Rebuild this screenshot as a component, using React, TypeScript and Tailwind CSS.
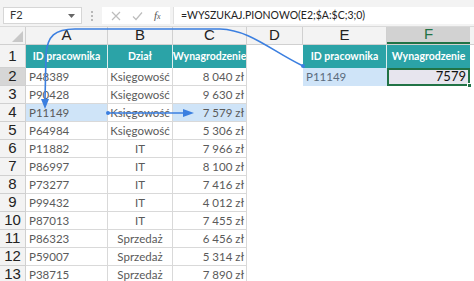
import React from "react";

const rows = [
  ["P48389", "Księgowość", "8 040 zł"],
  ["P90428", "Księgowość", "9 630 zł"],
  ["P11149", "Księgowość", "7 579 zł"],
  ["P64984", "Księgowość", "5 306 zł"],
  ["P11882", "IT", "7 966 zł"],
  ["P86997", "IT", "8 100 zł"],
  ["P73277", "IT", "7 416 zł"],
  ["P99432", "IT", "4 012 zł"],
  ["P87013", "IT", "7 455 zł"],
  ["P86323", "Sprzedaż", "6 456 zł"],
  ["P59007", "Sprzedaż", "5 314 zł"],
  ["P38715", "Sprzedaż", "7 890 zł"],
];

function FormulaBar() {
  return (
    <div className="h-[27px] bg-[#f3f3f3] border-b border-[#dadada] flex items-start pt-[7px] pl-[3px]">
      <div className="w-[79px] h-[17px] bg-white border border-[#d6d6d6] flex items-center justify-between px-[6px]">
        <span className="text-[11px] text-[#333]">F2</span>
        <svg width="7" height="4" viewBox="0 0 7 4">
          <path d="M0 0 L7 0 L3.5 4 Z" fill="#666" />
        </svg>
      </div>
      <div className="w-[20px] h-[17px] flex flex-col items-center justify-center gap-[2px]">
        <span className="w-[2px] h-[2px] bg-[#b8b8b8]" />
        <span className="w-[2px] h-[2px] bg-[#b8b8b8]" />
        <span className="w-[2px] h-[2px] bg-[#b8b8b8]" />
      </div>
      <div className="w-[68px] h-[17px] bg-white flex items-center justify-around px-[4px]">
        <svg width="10" height="10" viewBox="0 0 10 10">
          <path d="M1 1 L9 9 M9 1 L1 9" stroke="#bdbdbd" strokeWidth="1.2" />
        </svg>
        <svg width="11" height="10" viewBox="0 0 11 10">
          <path d="M1 5.5 L4 8.5 L10 1.5" stroke="#bdbdbd" strokeWidth="1.2" fill="none" />
        </svg>
        <span className="text-[11px] italic text-[#555] font-['Liberation_Serif',serif]">f<span className="text-[8px]">x</span></span>
      </div>
      <div className="ml-[3px] flex-1 h-[17px] bg-white border-l border-[#e0e0e0] flex items-center pl-[7px]">
        <span className="text-[10.5px] text-[#222] whitespace-nowrap">=WYSZUKAJ.PIONOWO(E2;$A:$C;3;0)</span>
      </div>
    </div>
  );
}

function Arrows() {
  return (
    <svg className="absolute left-0 top-0 pointer-events-none" width="474" height="281" viewBox="0 0 474 281">
      <path
        d="M303 66 C 270 50, 250 30, 220 29 L 75 29 C 55 29, 47 36, 46 55 L 45 100"
        stroke="#3b7fe0"
        strokeWidth="1.6"
        fill="none"
      />
      <path d="M41 99 L45 109 L49 99 Z" fill="#3b7fe0" />
      <circle cx="303" cy="66" r="2" fill="#3b7fe0" />
      <path d="M108 113 L186 113" stroke="#3b7fe0" strokeWidth="1.6" />
      <circle cx="108" cy="113" r="2" fill="#3b7fe0" />
      <path d="M183 109 L194 113 L183 117 Z" fill="#3b7fe0" />
    </svg>
  );
}

export default function App() {
  const cell = "border-r border-b border-[#d9d9d9] flex items-center text-[11.5px] text-[#5a5a5a] whitespace-nowrap overflow-hidden";
  const head = "bg-[#2ba3a7] flex items-center justify-center text-[10.5px] font-bold text-white whitespace-nowrap overflow-hidden";
  return (
    <div className="relative w-[474px] h-[281px] overflow-hidden bg-white font-['Lato',sans-serif]">
      <FormulaBar />
      {/* column letters */}
      <div className="flex h-[18px] bg-[#f3f3f3] text-[15px] text-[#222] font-['Liberation_Sans',sans-serif] border-b border-[#d0d0d0]">
        <div className="w-[26px] border-r border-[#d0d0d0] relative">
          <svg className="absolute right-[2px] bottom-[2px]" width="11" height="11" viewBox="0 0 11 11">
            <path d="M11 0 L11 11 L0 11 Z" fill="#c8c8c8" />
          </svg>
        </div>
        <div className="w-[82px] border-r border-[#d0d0d0] flex items-center justify-center">A</div>
        <div className="w-[65px] border-r border-[#d0d0d0] flex items-center justify-center">B</div>
        <div className="w-[74px] border-r border-[#d0d0d0] flex items-center justify-center">C</div>
        <div className="w-[56px] border-r border-[#d0d0d0] flex items-center justify-center">D</div>
        <div className="w-[84px] border-r border-[#d0d0d0] flex items-center justify-center">E</div>
        <div className="w-[83px] bg-[#d2d2d2] text-[#217346] border-b-2 border-[#217346] flex items-center justify-center">F</div>
        <div className="flex-1" />
      </div>
      {/* header row */}
      <div className="flex h-[23px]">
        <div className="w-[26px] bg-[#f3f3f3] border-r border-b border-[#d0d0d0] flex items-center justify-center text-[15px] text-[#222] font-['Liberation_Sans',sans-serif]">1</div>
        <div className={`${head} w-[82px] border-r border-[#dfeeee]`}>ID pracownika</div>
        <div className={`${head} w-[65px] border-r border-[#dfeeee]`}>Dział</div>
        <div className={`${head} w-[74px] border-r border-[#d9d9d9]`}>Wynagrodzenie</div>
        <div className="w-[56px]" />
        <div className={`${head} w-[84px] border-r border-[#dfeeee]`}>ID pracownika</div>
        <div className={`${head} w-[83px]`}>Wynagrodzenie</div>
        <div className="flex-1" />
      </div>
      {rows.map((r, i) => {
        const n = i + 2;
        const hl = n === 4;
        return (
          <div key={n} className="flex h-[18px]">
            <div
              className={`w-[26px] border-r border-b border-[#d0d0d0] flex items-center justify-center text-[15px] text-[#222] font-['Liberation_Sans',sans-serif] ${
                n === 2 ? "bg-[#d6d6d6]" : "bg-[#f3f3f3]"
              }`}
            >
              {n}
            </div>
            <div className={`${cell} w-[82px] pl-[3px] ${hl ? "bg-[#cfe4f8]" : ""}`}>{r[0]}</div>
            <div className={`${cell} w-[65px] justify-center`}>{r[1]}</div>
            <div className={`${cell} w-[74px] justify-end pr-[2px] ${hl ? "bg-[#cfe4f8]" : ""}`}>{r[2]}</div>
            <div className="w-[56px]" />
            {n === 2 ? (
              <>
                <div className="w-[84px] bg-[#cfe4f8] flex items-center pl-[3px] text-[11.5px] text-[#5a6b7c]">P11149</div>
                <div className="w-[83px] relative bg-[#e7e5ee] border-2 border-[#217346] flex items-center justify-end pr-[2px] text-[13px] text-[#111]">
                  7579
                  <span className="absolute right-[-4px] bottom-[-4px] w-[5px] h-[5px] bg-[#217346] border border-white" />
                </div>
              </>
            ) : null}
          </div>
        );
      })}
      <Arrows />
    </div>
  );
}
